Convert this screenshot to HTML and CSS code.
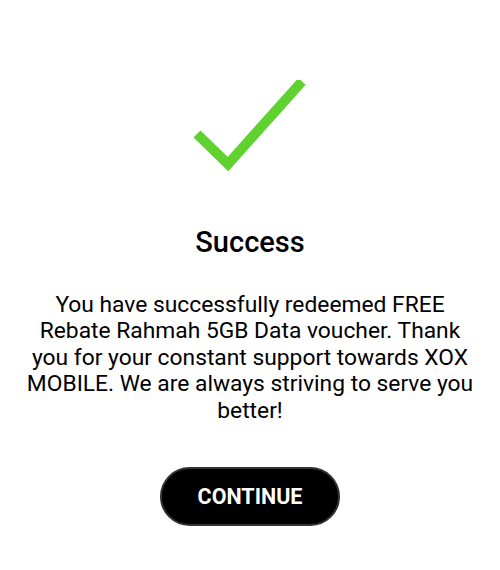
FILE: index.html
```html
<html lang="en">
  <head>
    <meta name="viewport" content="width=device-width, initial-scale=1" />
    <title>Success</title>
    <link rel="stylesheet" href="styles.css">
  </head>
  <body>
    <div class="dialog">
      <svg class="check-icon" width="120" height="100" viewBox="0 0 120 100">
        <polyline points="7,54 38,84 112,1.5" fill="none" stroke="#5fd22f" stroke-width="10" stroke-linejoin="miter" />
      </svg>
      <h1 class="title">Success</h1>
      <p class="message">
        You have successfully redeemed FREE Rebate Rahmah 5GB Data voucher. Thank you for your constant support towards XOX MOBILE. We are always striving to serve you better!
      </p>
      <button class="continue-btn">CONTINUE</button>
    </div>
  </body>
</html>
```

FILE: styles.css
```css
html,
body {
  margin: 0;
  background-color: #fff;
}
.dialog {
  display: flex;
  flex-direction: column;
  align-items: center;
  padding: 80px 22px 0;
  font-family: Roboto, "Noto Sans", sans-serif;
  color: #000;
}
.check-icon {
  display: block;
}
.title {
  margin: 45px 0 0;
  font-size: 29px;
  font-weight: 500;
  line-height: 34px;
}
.message {
  margin: 33px 0 0;
  font-size: 22.8px;
  line-height: 26.4px;
  text-align: center;
}
.continue-btn {
  margin-top: 43px;
  width: 180px;
  height: 59px;
  border: 2px solid #333;
  border-radius: 30px;
  background-color: #000;
  color: #fff;
  font-family: Roboto, "Noto Sans", sans-serif;
  font-size: 21.5px;
  font-weight: 700;
}
```
